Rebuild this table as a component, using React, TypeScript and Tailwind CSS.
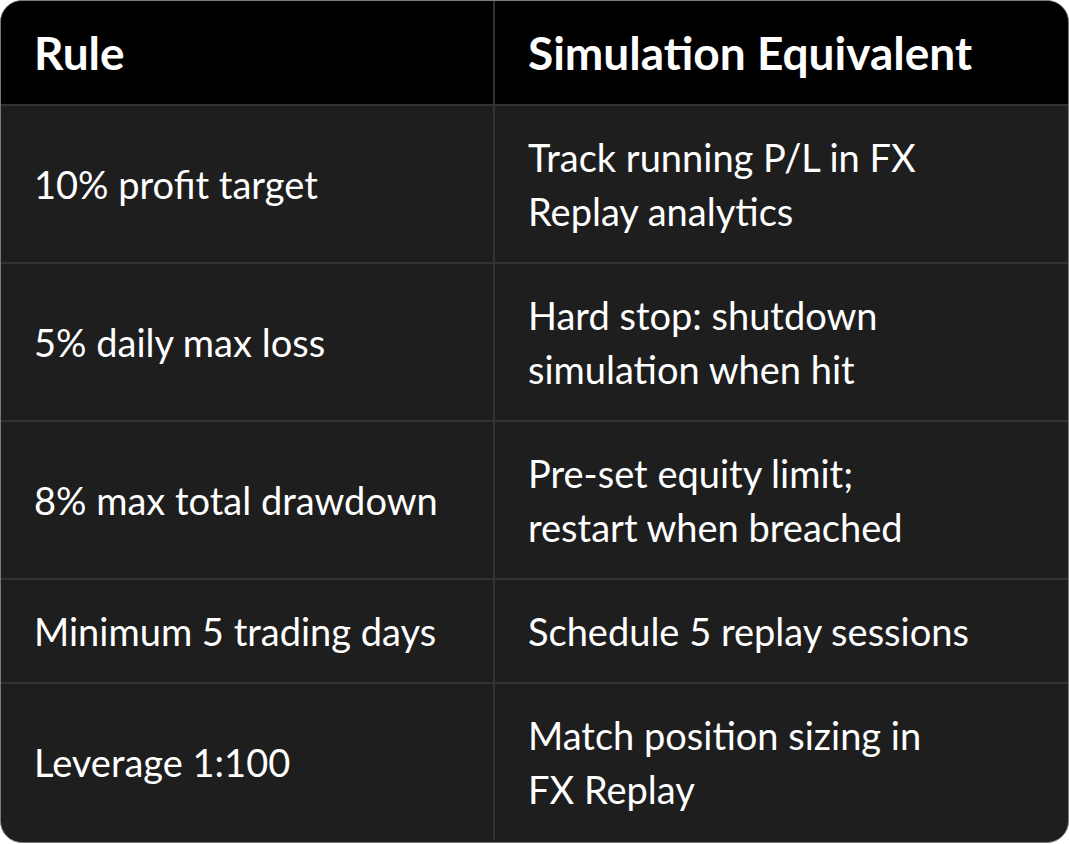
const rows = [
  { rule: '10% profit target', sim: ['Track running P/L in FX', 'Replay analytics'] },
  { rule: '5% daily max loss', sim: ['Hard stop: shutdown', 'simulation when hit'] },
  { rule: '8% max total drawdown', sim: ['Pre-set equity limit;', 'restart when breached'] },
  { rule: 'Minimum 5 trading days', sim: ['Schedule 5 replay sessions'] },
  { rule: 'Leverage 1:100', sim: ['Match position sizing in', 'FX Replay'] },
]

export default function App() {
  return (
    <div className="min-h-screen bg-white">
      <div className="w-[1069px] h-[843px] overflow-hidden rounded-[22px] border border-[#7a7a7a] bg-[#1e1e1e]">
        <table className="w-full border-collapse text-white" style={{ fontFamily: 'Lato, "Noto Sans", sans-serif' }}>
          <thead>
            <tr className="bg-black">
              <th className="w-[493px] h-[104px] border-r-2 border-[#333] px-[33px] text-left text-[46px] font-bold">Rule</th>
              <th className="px-[33px] text-left text-[46px] font-bold">Simulation Equivalent</th>
            </tr>
          </thead>
          <tbody>
            {rows.map((r) => (
              <tr key={r.rule} className="border-t-2 border-[#333]">
                <td className="border-r-2 border-[#333] px-[33px] py-[24px] text-[38px] leading-[54px] whitespace-nowrap">{r.rule}</td>
                <td className="px-[33px] py-[24px] text-[38px] leading-[54px] whitespace-nowrap">
                  {r.sim.map((line) => (
                    <div key={line}>{line}</div>
                  ))}
                </td>
              </tr>
            ))}
          </tbody>
        </table>
      </div>
    </div>
  )
}
